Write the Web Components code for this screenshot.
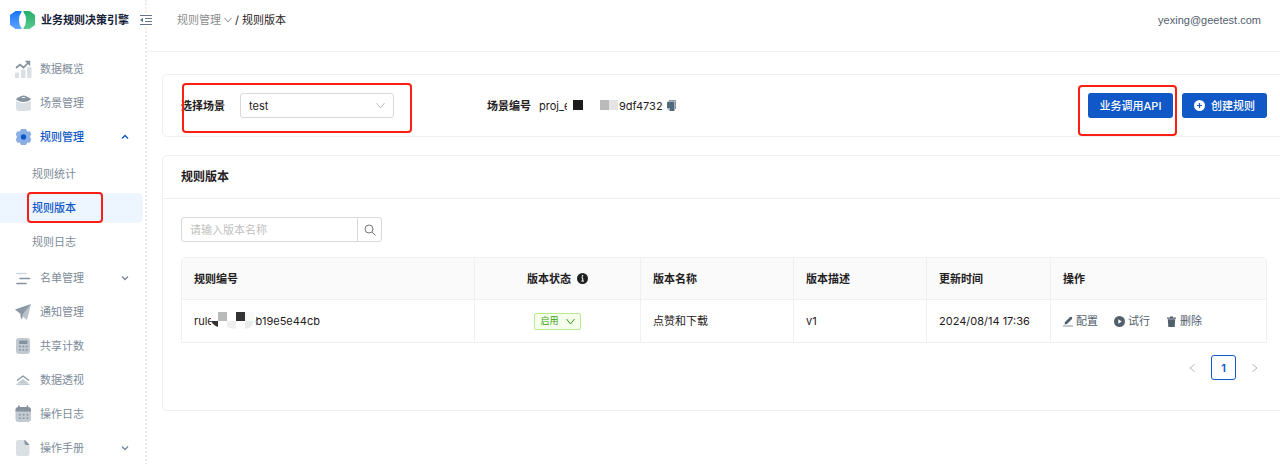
<!DOCTYPE html>
<html lang="zh-CN">
<head>
<meta charset="utf-8">
<meta name="viewport" content="width=device-width, initial-scale=1">
<title>业务规则决策引擎</title>
<style>
  html, body { margin: 0; min-height: 100%; background: #fff; }
  body {
    font: 11px/16px Inter, "Noto Sans CJK SC", sans-serif;
    color: #1f2022;
    overflow-x: hidden;
    --blue: #1058c7;
    --line: #f0f0f0;
    --muted: #7d8b98;
    --mark: #fa1e14;
  }
</style>
</head>
<body>
<rule-app></rule-app>

<script>
const define = (name, css, html, setup) => {
  customElements.define(name, class extends HTMLElement {
    constructor() {
      super();
      const root = this.attachShadow({ mode: 'open' });
      const tpl = document.createElement('template');
      tpl.innerHTML = `<style>*{box-sizing:border-box}svg{display:block;flex:none}button,input,select{font:inherit;margin:0}a{color:inherit;text-decoration:none}${css}</style>${html}`;
      root.append(tpl.content.cloneNode(true));
    }
    connectedCallback() { if (setup) setup(this, this.shadowRoot); }
  });
};

const ICONS = {
  overview: '<rect x="1" y="12.500" width="4" height="5.500" rx="1" fill="#d9dfe3"/><rect x="7" y="9.500" width="4.500" height="8.500" rx="1" fill="#d9dfe3"/><rect x="13" y="7" width="4.500" height="11" rx="1" fill="#d9dfe3"/><path d="M2 8 6 4.500l3.500 3L15 2" fill="none" stroke="#85929f" stroke-width="1.700"/><path d="M10.800.8h5.400v5.400z" fill="#85929f"/>',
  scene: '<path d="M2 7q7 4 15 0v7q0 3-3 3H5q-3 0-3-3z" fill="#d9dfe3"/><path d="M2 5.500Q2.500 3.500 5.500 3 6.500 1.500 9.500 1.500t4 1.500q3 .5 3.500 2.500Q13.500 8 9.500 8T2 5.500z" fill="#85929f"/><path d="M7 4q2.500-2 5 0z" fill="#fff"/>',
  rules: '<path d="M7 1h5l1.200 2.500 2.500-.2 1.600 3L16 9l1.300 2.700-1.600 3-2.500-.2L12 17H7l-1.200-2.500-2.500.2-1.600-3L3 9 1.700 6.300l1.600-3 2.500.2z" fill="#8bafe5"/><circle cx="9.500" cy="9" r="2.700" fill="#1058c7"/>',
  list: '<path d="M3 4.500h9" stroke="#d0d7dd" stroke-width="1.600" stroke-linecap="round"/><path d="M6 9.500h9.500M3 14.500h9" stroke="#85929f" stroke-width="1.600" stroke-linecap="round"/>',
  notify: '<path d="M1 6.500 17 1 6.500 11z" fill="#8b97a3"/><path d="M17 1 13 17l-3.500-3L7 16.500 6.500 10z" fill="#b9c2c9"/><path d="M17 1 6.500 10 7 16.500l2-6z" fill="#85929f"/>',
  count: '<rect x="2" y="1" width="14" height="16" rx="3" fill="#c1cad1"/><rect x="5" y="3.500" width="8.500" height="3.500" rx=".8" fill="#85929f"/><path d="M5 9.500h9M5 13h9" stroke="#85929f" stroke-width="1.600" stroke-dasharray="1.800 1.600"/>',
  pivot: '<path d="M3 9.500 9 5l6 4.500" fill="none" stroke="#85929f" stroke-width="1.200"/><path d="M9 8l6 4.800H3z" fill="#c1cad1"/><path d="M2.500 13.500h13" stroke="#c1cad1" stroke-width="1.200"/>',
  log: '<rect x="1.500" y="3" width="15.500" height="14" rx="3" fill="#c1cad1"/><path d="M1.500 6.500V5q0-3 3-3H14q3 0 3 3v1.500z" fill="#85929f"/><path d="M5 1v3M13.500 1v3" stroke="#85929f" stroke-width="1.600" stroke-linecap="round"/><path d="M5 9.800h9.400M5 13.300h9.400" stroke="#85929f" stroke-width="1.500" stroke-dasharray="1.600 2.200"/>',
  manual: '<path d="M4.500 1H11l4.500 5v8.500q0 2.500-2.500 2.500H4.500Q2 17 2 14.500v-11Q2 1 4.500 1z" fill="#d9dfe3"/><path d="M10.500 1h.5l4.500 5H13q-2.500 0-2.500-2.500z" fill="#85929f"/>'
};

define('nav-item', `
  :host { display: block; color: var(--muted); padding: 2px 0; margin-right: 3px; }
  a { display: flex; align-items: center; height: 30px; padding-left: 14px; padding-right: 14px; gap: 8px; border-radius: 0 5px 5px 0; }
  .label { flex: 1; }
  :host([sub]) a { padding-left: 32px; }
  :host([open]), :host([current]) { color: var(--blue); font-weight: 500; }
  :host([current]) a { background: #edf5fe; }
`, `<a href="#"><svg class="icon" width="18" height="18" viewBox="0 0 18 18" aria-hidden="true"></svg><span class="label"><slot></slot></span><svg class="arrow" width="8" height="6" viewBox="0 0 8 6" fill="none" stroke="currentColor" stroke-width="1.400" aria-hidden="true"><path d="M1 1.500l3 3 3-3"/></svg></a>`,
(el, root) => {
  const icon = root.querySelector('.icon');
  if (el.hasAttribute('sub')) icon.remove(); else icon.innerHTML = ICONS[el.getAttribute('icon')];
  const arrow = root.querySelector('.arrow');
  if (el.hasAttribute('open')) arrow.innerHTML = '<path d="M1 4.500l3-3 3 3"/>';
  else if (arrow && !el.hasAttribute('more')) arrow.remove();
});

/* Red frame drawn over whatever it wraps; the insets are set by its user. */
define('mark-frame', `
  :host { position: relative; display: block; }
  .frame { position: absolute; inset: var(--inset, 0); border: 2px solid var(--mark); border-radius: 4px; pointer-events: none; z-index: 1; }
`, `<slot></slot><div class="frame"></div>`);

define('side-nav', `
  :host { display: block; width: 146px; flex: none; }
  .brand { display: flex; align-items: center; height: 40px; padding-left: 10px; margin-bottom: 12px; font-weight: 700; color: #15213a; white-space: nowrap; }
  .brand span { margin-left: 6px; flex: 1; }
  .brand button { border: 0; padding: 0; background: #fff; margin-right: -6px; flex: none; position: relative; }
  .sub { padding: 3px 0 2px; }
`, `
  <div class="brand">
    <svg width="25" height="20" viewBox="0 0 25 20" aria-hidden="true">
      <defs><linearGradient id="b" x2="0" y2="1"><stop stop-color="#1774fb"/><stop offset="1" stop-color="#5fa5ff"/></linearGradient>
      <linearGradient id="g" x2="0" y2="1"><stop stop-color="#22ae6b"/><stop offset="1" stop-color="#5cc98f"/></linearGradient></defs>
      <path d="M5.500 1H11q1 0 .6 1Q9 5 9 10t2.600 8q.4 1-.6 1H5.500L0 15V5z" fill="url(#b)"/><path d="M14 1h5.500L25 5v10l-5.500 4H14q-1 0-.6-1Q16 15 16 10t-2.600-8Q13 1 14 1z" fill="url(#g)"/>
    </svg>
    <span>业务规则决策引擎</span>
    <button aria-label="收起菜单"><svg width="12" height="12" viewBox="0 0 12 12" fill="none" stroke="#687786" stroke-width="1.200"><path d="M0 1.500h12M5 4.500h7M5 7.500h7M0 10.500h12"/><path d="M3 3.800v4.400L0 6z" fill="#687786" stroke="none"/></svg></button>
  </div>
  <nav>
    <nav-item icon="overview">数据概览</nav-item>
    <nav-item icon="scene">场景管理</nav-item>
    <nav-item icon="rules" open>规则管理</nav-item>
    <div class="sub">
      <nav-item sub>规则统计</nav-item>
      <mark-frame style="--inset: 1px 43px 2px 27px"><nav-item sub current>规则版本</nav-item></mark-frame>
      <nav-item sub>规则日志</nav-item>
    </div>
    <nav-item icon="list" more>名单管理</nav-item>
    <nav-item icon="notify">通知管理</nav-item>
    <nav-item icon="count">共享计数</nav-item>
    <nav-item icon="pivot">数据透视</nav-item>
    <nav-item icon="log">操作日志</nav-item>
    <nav-item icon="manual" more>操作手册</nav-item>
  </nav>
`);

define('top-bar', `
  :host { display: flex; justify-content: space-between; height: 52px; padding: 12px 19px 0 30px; border-bottom: 1px solid var(--line); }
  nav { display: flex; align-items: center; height: 16px; gap: 3px; }
  .parent { display: flex; align-items: center; gap: 3px; color: #8c8c8c; }
  .mail { color: #52606d; font-family: "Liberation Sans", sans-serif; }
`, `
  <nav aria-label="面包屑"><a class="parent" href="#">规则管理<svg width="8" height="6" viewBox="0 0 8 6" fill="none" stroke="#8c8c8c"><path d="M.5.800 4 5 7.500.800"/></svg></a><span>/</span><span>规则版本</span></nav>
  <a class="mail" href="#">yexing@geetest.com</a>
`);

define('app-button', `
  :host { display: block; }
  button { display: flex; align-items: center; justify-content: center; gap: 6px; width: 85px; height: 25px; padding: 0; border: 0; border-radius: 3px; background: var(--blue); color: #fff; font-weight: 500; white-space: nowrap; }
`, `<button><slot name="icon"></slot><slot></slot></button>`);

define('scene-bar', `
  :host { display: flex; align-items: center; height: 63px; padding: 0 19px 0 18px; border: 1px solid var(--line); border-radius: 5px; background: #fff; }
  .pick { display: flex; align-items: center; gap: 15px; }
  label, .name { font-weight: 600; }
  .select { position: relative; }
  select { appearance: none; display: block; width: 154px; height: 25px; padding: 0 8px; border: 1px solid #d9d9d9; border-radius: 3px; background: #fff; color: inherit; }
  .select svg { position: absolute; right: 9px; top: 9px; pointer-events: none; }
  .code { display: flex; align-items: center; margin-left: 93px; flex: 1; }
  .code .name { margin-right: 8px; }
  .head { width: 28px; white-space: nowrap; }
  .mosaic { position: relative; background: #fff; }
  .code button { border: 0; background: none; padding: 0; margin-left: 4px; }
  .actions { display: flex; gap: 9px; }
`, `
  <mark-frame style="--inset: -10px -18px -15px 1px"><div class="pick"><label for="scene">选择场景</label>
    <div class="select"><select id="scene"><option>test</option></select><svg width="9" height="7" viewBox="0 0 9 7" fill="none" stroke="#bfbfbf"><path d="M.5 1l4 5 4-5"/></svg></div></div></mark-frame>
  <div class="code"><span class="name">场景编号</span><span class="head">proj_e</span>
    <svg class="mosaic" width="52" height="14" viewBox="0 0 52 14" aria-hidden="true"><path d="M6 1h10v10H6z" fill="#1c1c1c"/><path d="M33 1h9v10h-9z" fill="#bababa"/><path d="M42 1h9v10h-9z" fill="#e4e4e4"/></svg>
    <span>9df4732</span>
    <button aria-label="复制"><svg width="9" height="11" viewBox="0 0 9 11"><path d="M2 0h6q1 0 1 1v8H8V1H2z" fill="#8794a0"/><path d="M1.500 1.500h6V11H3L0 8V3q0-1.500 1.500-1.500z" fill="#52687b"/><path d="M0 8h3v3z" fill="#a9b4bd"/></svg></button>
  </div>
  <div class="actions">
    <mark-frame style="--inset: -8px -4px -18px -10px"><app-button>业务调用API</app-button></mark-frame>
    <app-button><svg slot="icon" width="11" height="11" viewBox="0 0 11 11" style="display:block"><circle cx="5.500" cy="5.500" r="5.500" fill="#fff"/><path d="M5.500 3v5M3 5.500h5" stroke="#1058c7" stroke-width="1.200"/></svg>创建规则</app-button>
  </div>
`);

define('search-box', `
  :host { display: flex; width: 201px; height: 25px; border: 1px solid #d9d9d9; border-radius: 3px; background: #fff; }
  input { flex: 1; min-width: 0; border: 0; padding: 0 8px; background: none; outline: 0; }
  input::placeholder { color: #bfbfbf; opacity: 1; }
  button { width: 24px; border: 0; border-left: 1px solid #d9d9d9; padding: 0; background: none; display: grid; place-items: center; }
`, `<input type="search" aria-label="版本名称" placeholder="请输入版本名称"><button aria-label="搜索"><svg width="12" height="12" viewBox="0 0 12 12" fill="none" stroke="#777"><circle cx="5" cy="5" r="4"/><path d="M8 8l3.500 3.500"/></svg></button>`);

define('version-table', `
  :host { display: block; border: 1px solid var(--line); border-radius: 5px 5px 0 0; overflow: hidden; }
  table { width: 100%; table-layout: fixed; border-collapse: separate; border-spacing: 0; }
  th, td { height: 42px; padding: 0 12px; text-align: left; border-right: 1px solid var(--line); white-space: nowrap; }
  th { background: #fafafa; font-weight: 600; border-bottom: 1px solid var(--line); }
  th:last-child, td:last-child { border-right: 0; }
  .mid { text-align: center; }
  .row, .ops { display: flex; align-items: center; }
  .mid .row { justify-content: center; gap: 6px; }
  .head { width: 17px; }
  .tail { width: 65px; display: flex; justify-content: flex-end; }
  .mosaic { position: relative; background: #fff; }
  .tag { display: inline-flex; align-items: center; gap: 7px; height: 17px; padding: 0 5px; border: 1px solid #b7eb8f; border-radius: 2px; background: #f6ffed; color: #389e0d; font-size: 9px; }
  .ops { gap: 16px; color: #52606d; }
  .ops a { display: flex; align-items: center; gap: 3px; }
`, `
  <table>
    <colgroup><col><col style="width:166px"><col style="width:153px"><col style="width:133px"><col style="width:124px"><col style="width:215px"></colgroup>
    <thead><tr><th>规则编号</th><th class="mid"><div class="row">版本状态<svg width="11" height="11" viewBox="0 0 11 11" aria-hidden="true"><circle cx="5.500" cy="5.500" r="5.500" fill="#1f2022"/><path d="M4.500 4.800h1.200V8M4.300 8.100h2.700" stroke="#fff" fill="none"/><circle cx="5.500" cy="2.900" r=".8" fill="#fff"/></svg></div></th><th>版本名称</th><th>版本描述</th><th>更新时间</th><th>操作</th></tr></thead>
    <tbody><tr>
      <td><div class="row"><span class="head">rule</span><svg class="mosaic" width="44" height="20" viewBox="0 0 44 20" aria-hidden="true"><path d="M7 1h9v9H7z" fill="#b9b9b9"/><path d="M0 10h7v6q-5-2-7-6zM25 1h9v9h-9z" fill="#333"/><path d="M16 10h9v8q-5 0-9-2z" fill="#efefef"/><path d="M34 1h9v9h-9z" fill="#f8f8f8"/><path d="M34 10h9q-2 7-9 8z" fill="#ebebeb"/></svg><span class="tail">bb19e5e44cb</span></div></td>
      <td class="mid"><div class="row"><button class="tag">启用<svg width="9" height="7" viewBox="0 0 9 7" fill="none" stroke="currentColor"><path d="M.5 1l4 5 4-5"/></svg></button></div></td>
      <td>点赞和下载</td><td>v1</td><td>2024/08/14 17:36</td>
      <td><div class="ops">
        <a href="#"><svg width="10" height="11" viewBox="0 0 10 11"><path d="M1.500 8.500 2 6l5-5q1-.7 1.800 0T9 3L4 8z" fill="#52606d"/><path d="M0 10h10" stroke="#8794a0"/></svg>配置</a>
        <a href="#"><svg width="11" height="11" viewBox="0 0 11 11"><circle cx="5.500" cy="5.500" r="5.500" fill="#52606d"/><path d="M4.300 3.300 7.700 5.500 4.300 7.700z" fill="#fff"/></svg>试行</a>
        <a href="#"><svg width="11" height="11" viewBox="0 0 11 11"><path d="M1 1.500h3V.500h3v1h3v1.200H1zM1.800 3.200h7.400L8.700 11H2.300z" fill="#52606d"/></svg>删除</a>
      </div></td>
    </tr></tbody>
  </table>
`);

define('page-nav', `
  :host { display: flex; justify-content: flex-end; gap: 7px; }
  button { width: 24px; height: 25px; padding: 0; border: 0; background: none; display: grid; place-items: center; color: var(--blue); font-weight: 600; }
  .on { width: 25px; border: 1px solid var(--blue); border-radius: 3px; }
`, `<button aria-label="上一页" disabled><svg width="6" height="8" viewBox="0 0 6 8" fill="none" stroke="#b5b5b5"><path d="M5.500.5 1 4l4.500 3.500"/></svg></button><button class="on">1</button><button aria-label="下一页" disabled><svg width="6" height="8" viewBox="0 0 6 8" fill="none" stroke="#b5b5b5"><path d="M.5.5 5 4 .5 7.500"/></svg></button>`);

define('version-panel', `
  :host { display: block; border: 1px solid var(--line); border-radius: 5px; background: #fff; }
  h2 { margin: 0; padding: 0 18px; font-size: 12px; line-height: 42px; font-weight: 600; border-bottom: 1px solid var(--line); }
  .body { padding: 18px 19px 30px 18px; }
  search-box { margin-bottom: 15px; }
  page-nav { margin-top: 12px; }
`, `<h2>规则版本</h2><div class="body"><search-box></search-box><version-table></version-table><page-nav></page-nav></div>`);

/* The cards are a little wider than the view and run off its right side. */
define('rule-app', `
  :host { display: flex; min-height: 100vh; overflow: hidden; }
  main { flex: 1; min-width: 0; }
  .rail { flex: none; width: 0; border-left: 2px dotted #ececec; margin-left: -1px; }
  .content { display: grid; gap: 18px; padding: 22px 0 24px; margin: 0 -7px 0 15px; }
  side-nav { z-index: 1; }
`, `<side-nav></side-nav><div class="rail"></div><main><top-bar></top-bar><div class="content"><scene-bar></scene-bar><version-panel></version-panel></div></main>`);
</script>
</body>
</html>
